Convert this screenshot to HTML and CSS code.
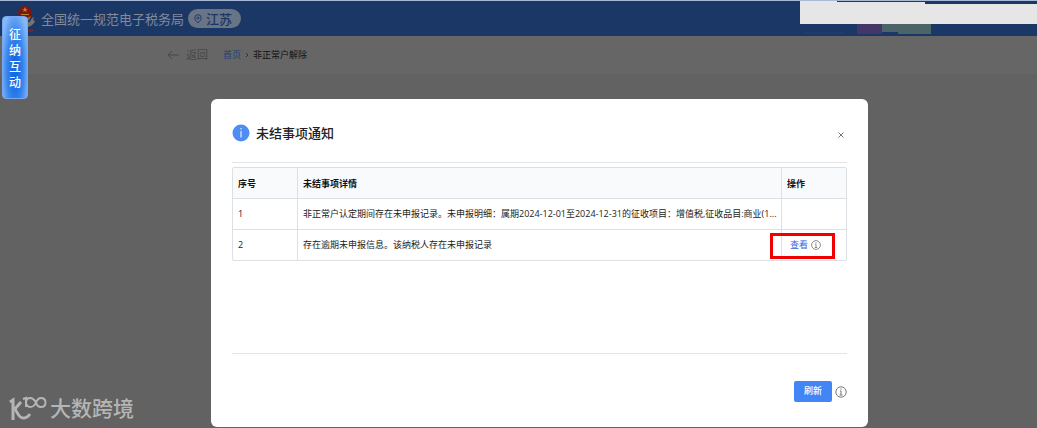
FILE: index.html
```html
<!DOCTYPE html>
<html lang="zh-CN">
<head>
<meta charset="utf-8">
<title>非正常户解除</title>
<link rel="stylesheet" href="styles.css">
</head>
<body>
<header class="topbar">
  <svg class="emblem" width="20" height="28" viewBox="0 0 20 28" aria-hidden="true">
    <path d="M6 19c4 1 8-1 10-6l2-1-1 3 2 1c-2 5-7 7-12 6z" fill="#77736f"/>
    <circle cx="9" cy="8" r="7" fill="#7b1712"/>
    <path d="M3 11q6 4 12 0l-2 4H5z" fill="#9a6c20"/>
    <path d="M9 2l1 2h2l-2 1 1 2-2-1-2 1 1-2-2-1h2zM5 9h8v1H5z" fill="#b98025"/>
    <path d="M4 17h11l-3 3H7z" fill="#74716e"/>
    <path d="M9 26l8-2 1 2-4 1z" fill="#7b2528"/>
  </svg>
  <span class="brand">全国统一规范电子税务局</span>
  <span class="region">
    <svg width="8" height="10" viewBox="0 0 8 10" fill="none" stroke="#1f3a68" aria-hidden="true"><path d="M4 9C2 7 .8 5.600.8 3.900a3.200 3.200 0 0 1 6.400 0C7.200 5.600 6 7 4 9z"/><circle cx="4" cy="4" r="1"/></svg>
    江苏
  </span>
  <svg class="account" width="237" height="35" viewBox="0 0 237 35" aria-hidden="true">
    <path d="M4 31h40v2H4z" fill="#1f3b69"/>
    <path d="M57 23h25v10H57z" fill="#443767"/>
    <path d="M82 23h49v10H98v-2H82z" fill="#4a6468"/>
    <path d="M0 0h37v1h88v2h112v20H0z" fill="#e6e6e6"/>
  </svg>
</header>
<nav class="crumbs" aria-label="面包屑">
  <button class="back" type="button">
    <svg width="12" height="10" viewBox="0 0 12 10" fill="none" stroke="currentColor" aria-hidden="true"><path d="M12 5H1M5 1L1 5l4 4"/></svg>
    返回
  </button>
  <a class="home" href="#">首页</a>
  <svg class="sep" width="4" height="6" viewBox="0 0 4 6" fill="none" stroke="#333" aria-hidden="true"><path d="M1 1l2 2-2 2"/></svg>
  <span class="current">非正常户解除</span>
</nav>
<main class="stage">
  <section class="dialog" role="dialog" aria-labelledby="dialog-title">
    <div class="dialog-head">
      <svg width="18" height="18" viewBox="0 0 18 18" aria-hidden="true"><circle cx="9" cy="9" r="8.500" fill="#4f8df5"/><path d="M8.500 4h1v1.500h-1zM8.500 7h1v6.500h-1z" fill="#fff"/></svg>
      <h1 class="title" id="dialog-title">未结事项通知</h1>
      <button class="close" type="button" aria-label="关闭"><svg width="6" height="6" viewBox="0 0 6 6" stroke="#777"><path d="M.5.5l5 5M5.500.5l-5 5"/></svg></button>
    </div>
    <div class="dialog-body">
      <table class="items">
        <thead><tr><th class="col-no">序号</th><th>未结事项详情</th><th class="col-act">操作</th></tr></thead>
        <tbody>
          <tr><td>1</td><td class="detail">非正常户认定期间存在未申报记录。未申报明细：属期2024-12-01至2024-12-31的征收项目：增值税,征收品目:商业(1...</td><td></td></tr>
          <tr><td>2</td><td class="detail">存在逾期未申报信息。该纳税人存在未申报记录</td>
            <td class="action"><a class="view" href="#">查看</a><svg class="hint" width="10" height="10" viewBox="0 0 12 12" fill="none" stroke="#777" aria-hidden="true"><circle cx="6" cy="6" r="5.300"/><path d="M6 2.500v1.300M5 5h1v4M4.500 9h3"/></svg><span class="marker"></span></td></tr>
        </tbody>
      </table>
    </div>
    <div class="dialog-foot">
      <button class="refresh" type="button">刷新</button>
      <svg width="12" height="12" viewBox="0 0 12 12" fill="none" stroke="#777" aria-hidden="true"><circle cx="6" cy="6" r="5.200"/><path d="M6 2.500v1.300M5 5h1v4M4.500 9h3"/></svg>
    </div>
  </section>
</main>
<button class="side-tab" type="button">征纳互动</button>
<div class="watermark">
  <svg width="38" height="26" viewBox="0 0 38 26" fill="none" stroke="#b5b5b5" aria-hidden="true">
    <path d="M1 6l3-2v20M12 6l-7 8M6 14c2 0 3 8 8 8 3 0 5-1 7-4" stroke-width="3"/>
    <path d="M14 3l3-1v9" stroke-width="2"/>
    <path d="M27 6.500C25 3 23 2 21 2c-3 0-4 2-4 4.500S19 11 21 11c3 0 5-2 6-4.500C28 4 30 2 32 2c3 0 4.500 2 4.500 4.500S35 11 32 11c-2 0-4-1-5-4.500z" stroke-width="2"/>
  </svg>
  <span>大数跨境</span>
</div>
</body>
</html>
```

FILE: styles.css
```css
* { box-sizing: border-box; }

body {
  margin: 0;
  min-height: 100vh;
  display: flex;
  flex-direction: column;
  background: #626262;
  color: #222;
  font: 9px/14px "Open Sans", "Noto Sans CJK SC", sans-serif;
}

button {
  border: 0;
  padding: 0;
  background: none;
  color: inherit;
  font: inherit;
}

a { text-decoration: none; }
svg { flex: none; display: block; }

.topbar {
  display: flex;
  align-items: center;
  height: 36px;
  padding-left: 16px;
  border-top: 1px solid #a6b9d8;
  background: #1b3766;
}

.brand {
  margin: 0 4px 0 5px;
  color: #838b99;
  font-size: 13px;
  line-height: 18px;
  white-space: nowrap;
}

.region {
  display: flex;
  align-items: center;
  gap: 4px;
  height: 19px;
  padding: 0 9px 0 6px;
  border-radius: 10px;
  background: #697486;
  color: #1b3766;
  font-size: 13px;
  font-weight: 500;
}

.account { margin-left: auto; }

.crumbs {
  display: flex;
  align-items: center;
  height: 38px;
  padding-left: 167px;
  background: #666;
}

.back {
  display: flex;
  align-items: center;
  gap: 7px;
  margin-right: 15px;
  color: #474747;
  font-size: 11px;
}

.home { color: #1f3e78; }
.sep { margin: 0 4px; }
.current { color: #111; }

.stage {
  flex: 1;
  display: flex;
  padding: 25px 169px 1px 211px;
}

.dialog {
  flex: 1;
  display: flex;
  flex-direction: column;
  min-width: 0;
  padding: 0 21px;
  border-radius: 6px;
  background: #fff;
}

.dialog-head {
  display: flex;
  align-items: center;
  gap: 6px;
  padding: 21px 0 16px;
  border-bottom: 1px solid #e4e4e4;
}

.title {
  margin: 0;
  color: #222;
  font-size: 13px;
  font-weight: 500;
  line-height: 26px;
}

.close {
  margin-left: auto;
  padding: 6px 3px 2px;
}

.dialog-body {
  flex: 1;
  padding: 4px 0 16px;
}

.items {
  width: 100%;
  table-layout: fixed;
  border: 1px solid #dcdfe3;
  border-radius: 2px;
  border-spacing: 0;
}

.items th,
.items td {
  height: 31px;
  padding: 0 5px;
  border-bottom: 1px solid #dcdfe3;
  text-align: left;
}

.items th + th,
.items td + td { border-left: 1px solid #dcdfe3; }
.items tr:last-child td { height: 30px; border-bottom: 0; }
.items th { padding-top: 2px; background: #f9fafc; color: #111; font-weight: 700; }
.items tr:last-child th { height: 31px; }
.col-no { width: 64px; }
.col-act { width: 65px; }

.items .detail {
  padding-right: 0;
  overflow: hidden;
  text-overflow: ellipsis;
  white-space: nowrap;
}

.items .action { position: relative; padding-left: 8px; }
.view { color: #3a5fe0; }
.hint { display: inline-block; margin-left: 3px; vertical-align: -2px; }

.marker {
  position: absolute;
  inset: 3px 11px 1px -12px;
  border: 3px solid #f00000;
  pointer-events: none;
}

.dialog-foot {
  display: flex;
  align-items: center;
  justify-content: flex-end;
  gap: 3px;
  padding: 27px 0 25px;
  border-top: 1px solid #e4e4e4;
}

.refresh {
  padding: 3px 10px 4px;
  border-radius: 2px;
  background: #4285f4;
  color: #fff;
  font-weight: 500;
}

.side-tab {
  position: absolute;
  top: 16px;
  left: 2px;
  width: 26px;
  padding: 10px 6px 7px;
  border: 1px solid #78a8f2;
  border-radius: 4px;
  background: radial-gradient(ellipse at 50% 65%, #1668e4 15%, #3a88ee 50%, #86b8f6 85%);
  color: #fff;
  font-size: 12px;
  font-weight: 500;
  line-height: 16px;
}

.watermark {
  position: absolute;
  bottom: 6px;
  left: 9px;
  display: flex;
  gap: 3px;
  color: #b5b5b5;
  font-size: 21px;
  font-weight: 500;
  line-height: 24px;
}
```
